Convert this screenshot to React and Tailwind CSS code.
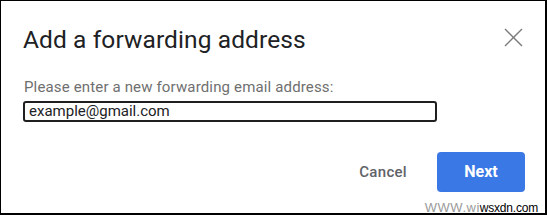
import React from "react";

function CloseIcon() {
  return (
    <svg width="19" height="19" viewBox="0 0 19 19" fill="none">
      <path d="M1 1 L18 18 M18 1 L1 18" stroke="#7a7a7a" strokeWidth="1.4" />
    </svg>
  );
}

export default function App() {
  return (
    <div
      className="w-[547px] h-[215px] bg-white border-black border-t border-l border-r-2 border-b-2 flex flex-col"
      style={{ fontFamily: "Roboto, 'Liberation Sans', sans-serif" }}
    >
      <div className="flex items-start justify-between pl-[22px] pr-[22px] pt-[23px]">
        <h2 className="text-[24.5px] leading-[32px] tracking-[0.1px] text-[#202124]">Add a forwarding address</h2>
        <button className="mt-[4px]">
          <CloseIcon />
        </button>
      </div>

      <div className="pl-[23px] mt-[21px] text-[15px] leading-[20px] text-[#6f6f6f] tracking-[0.15px]">
        Please enter a new forwarding email address:
      </div>

      <div className="pl-[22px] mt-[2px]">
        <input
          className="w-[414px] h-[21px] border-2 border-[#1f1f1f] rounded-[3px] px-[4px] text-[15px] text-[#202124] outline-none"
          defaultValue="example@gmail.com"
          style={{ fontFamily: "Roboto, 'Liberation Sans', sans-serif" }}
        />
      </div>

      <div className="flex items-center justify-end gap-[30px] pr-[20px] mt-[29px]">
        <button className="text-[15px] font-medium text-[#5f6368] tracking-[0.3px]">Cancel</button>
        <button className="w-[88px] h-[40px] rounded-[4px] bg-[#3a78e5] text-white text-[16px] font-bold">
          Next
        </button>
      </div>

      <div className="flex justify-end items-baseline pr-[7px] mt-[10px] leading-[12px]" style={{ fontFamily: "'Liberation Sans', sans-serif" }}>
        <span className="text-[13px] text-[#9a9a9a] tracking-[0.5px]">WWW.wi</span>
        <span className="text-[12px] text-black tracking-[-0.2px]">wsxdn.com</span>
      </div>
    </div>
  );
}
